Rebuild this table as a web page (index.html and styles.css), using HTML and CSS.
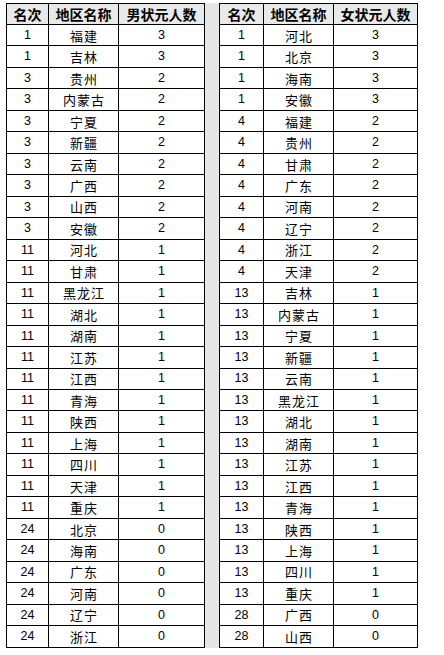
FILE: index.html
```html
<!DOCTYPE html>
<html lang="zh">
<head>
<meta charset="utf-8">
<link rel="stylesheet" href="styles.css">
</head>
<body>
<div class="page">
  <div class="tbl left">
    <div class="c h">名次</div><div class="c h">地区名称</div><div class="c h">男状元人数</div>
    <div class="c">1</div><div class="c z">福建</div><div class="c">3</div>
    <div class="c">1</div><div class="c z">吉林</div><div class="c">3</div>
    <div class="c">3</div><div class="c z">贵州</div><div class="c">2</div>
    <div class="c">3</div><div class="c z">内蒙古</div><div class="c">2</div>
    <div class="c">3</div><div class="c z">宁夏</div><div class="c">2</div>
    <div class="c">3</div><div class="c z">新疆</div><div class="c">2</div>
    <div class="c">3</div><div class="c z">云南</div><div class="c">2</div>
    <div class="c">3</div><div class="c z">广西</div><div class="c">2</div>
    <div class="c">3</div><div class="c z">山西</div><div class="c">2</div>
    <div class="c">3</div><div class="c z">安徽</div><div class="c">2</div>
    <div class="c">11</div><div class="c z">河北</div><div class="c">1</div>
    <div class="c">11</div><div class="c z">甘肃</div><div class="c">1</div>
    <div class="c">11</div><div class="c z">黑龙江</div><div class="c">1</div>
    <div class="c">11</div><div class="c z">湖北</div><div class="c">1</div>
    <div class="c">11</div><div class="c z">湖南</div><div class="c">1</div>
    <div class="c">11</div><div class="c z">江苏</div><div class="c">1</div>
    <div class="c">11</div><div class="c z">江西</div><div class="c">1</div>
    <div class="c">11</div><div class="c z">青海</div><div class="c">1</div>
    <div class="c">11</div><div class="c z">陕西</div><div class="c">1</div>
    <div class="c">11</div><div class="c z">上海</div><div class="c">1</div>
    <div class="c">11</div><div class="c z">四川</div><div class="c">1</div>
    <div class="c">11</div><div class="c z">天津</div><div class="c">1</div>
    <div class="c">11</div><div class="c z">重庆</div><div class="c">1</div>
    <div class="c">24</div><div class="c z">北京</div><div class="c">0</div>
    <div class="c">24</div><div class="c z">海南</div><div class="c">0</div>
    <div class="c">24</div><div class="c z">广东</div><div class="c">0</div>
    <div class="c">24</div><div class="c z">河南</div><div class="c">0</div>
    <div class="c">24</div><div class="c z">辽宁</div><div class="c">0</div>
    <div class="c">24</div><div class="c z">浙江</div><div class="c">0</div>
  </div>
  <div class="strip"></div>
  <div class="tbl right">
    <div class="c h">名次</div><div class="c h">地区名称</div><div class="c h">女状元人数</div>
    <div class="c">1</div><div class="c z">河北</div><div class="c">3</div>
    <div class="c">1</div><div class="c z">北京</div><div class="c">3</div>
    <div class="c">1</div><div class="c z">海南</div><div class="c">3</div>
    <div class="c">1</div><div class="c z">安徽</div><div class="c">3</div>
    <div class="c">4</div><div class="c z">福建</div><div class="c">2</div>
    <div class="c">4</div><div class="c z">贵州</div><div class="c">2</div>
    <div class="c">4</div><div class="c z">甘肃</div><div class="c">2</div>
    <div class="c">4</div><div class="c z">广东</div><div class="c">2</div>
    <div class="c">4</div><div class="c z">河南</div><div class="c">2</div>
    <div class="c">4</div><div class="c z">辽宁</div><div class="c">2</div>
    <div class="c">4</div><div class="c z">浙江</div><div class="c">2</div>
    <div class="c">4</div><div class="c z">天津</div><div class="c">2</div>
    <div class="c">13</div><div class="c z">吉林</div><div class="c">1</div>
    <div class="c">13</div><div class="c z">内蒙古</div><div class="c">1</div>
    <div class="c">13</div><div class="c z">宁夏</div><div class="c">1</div>
    <div class="c">13</div><div class="c z">新疆</div><div class="c">1</div>
    <div class="c">13</div><div class="c z">云南</div><div class="c">1</div>
    <div class="c">13</div><div class="c z">黑龙江</div><div class="c">1</div>
    <div class="c">13</div><div class="c z">湖北</div><div class="c">1</div>
    <div class="c">13</div><div class="c z">湖南</div><div class="c">1</div>
    <div class="c">13</div><div class="c z">江苏</div><div class="c">1</div>
    <div class="c">13</div><div class="c z">江西</div><div class="c">1</div>
    <div class="c">13</div><div class="c z">青海</div><div class="c">1</div>
    <div class="c">13</div><div class="c z">陕西</div><div class="c">1</div>
    <div class="c">13</div><div class="c z">上海</div><div class="c">1</div>
    <div class="c">13</div><div class="c z">四川</div><div class="c">1</div>
    <div class="c">13</div><div class="c z">重庆</div><div class="c">1</div>
    <div class="c">28</div><div class="c z">广西</div><div class="c">0</div>
    <div class="c">28</div><div class="c z">山西</div><div class="c">0</div>
  </div>
</div>
</body>
</html>
```
FILE: styles.css
```css
html, body {
  margin: 0;
  padding: 0;
  background: #ffffff;
}
.page {
  display: flex;
  align-items: stretch;
  padding: 3px 0 0 6px;
  font-family: "Liberation Sans", "Noto Sans CJK SC", sans-serif;
  color: #000;
}
.tbl {
  display: grid;
  grid-template-rows: 21px repeat(29, 21.48px);
  border-left: 1px solid #000;
  border-top: 1px solid #000;
}
.left {
  grid-template-columns: 42px 70px 86px;
}
.right {
  grid-template-columns: 44px 70px 84px;
}
.strip {
  width: 14px;
  background: #e6e6e6;
}
.c {
  box-sizing: border-box;
  border-right: 1px solid #000;
  border-bottom: 1px solid #000;
  display: flex;
  align-items: center;
  justify-content: center;
  font-size: 12.5px;
  line-height: 1;
  white-space: nowrap;
}
.z {
  font-family: "Noto Sans CJK SC", sans-serif;
  font-size: 13px;
  letter-spacing: 1px;
  padding-left: 1px;
}
.h {
  background: #e9e9e9;
  font-family: "Noto Sans CJK SC", sans-serif;
  font-weight: bold;
  font-size: 14px;
}
```
